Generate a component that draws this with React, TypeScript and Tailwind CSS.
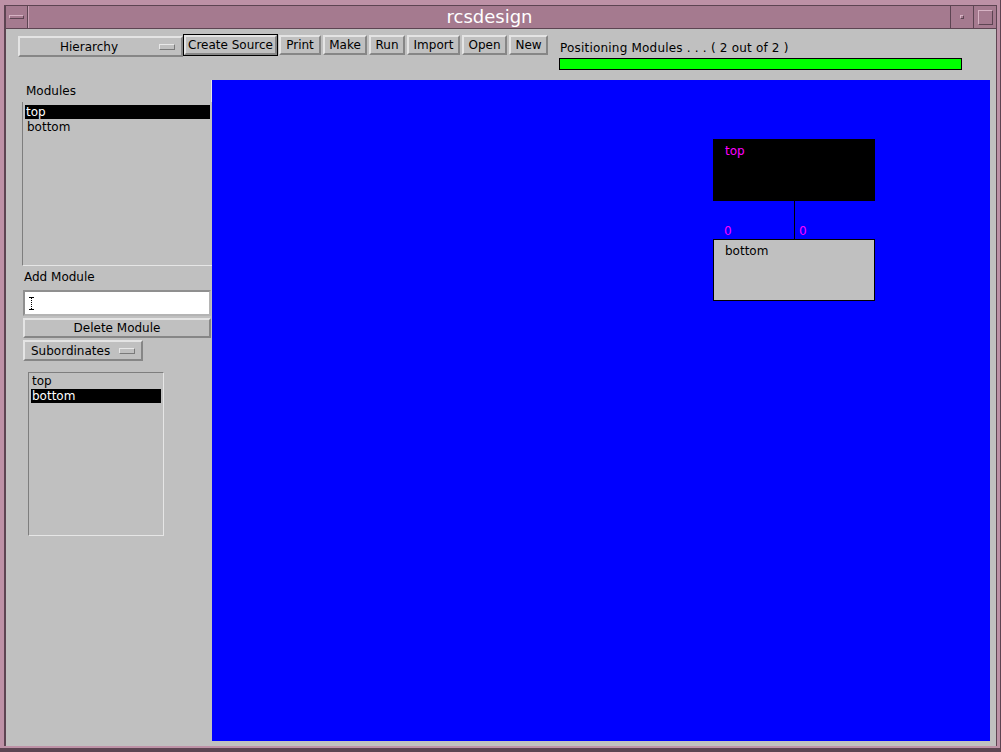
import React from "react";

const raised =
  "border-2 border-t-[#e4e4e4] border-l-[#e4e4e4] border-r-[#868686] border-b-[#868686] bg-[#c0c0c0]";
const sunken =
  "border border-t-[#7e7e7e] border-l-[#7e7e7e] border-r-[#e6e6e6] border-b-[#e6e6e6]";

function Indicator() {
  return (
    <span className="block h-[6px] w-[16px] border border-t-[#e8e8e8] border-l-[#e8e8e8] border-r-[#7a7a7a] border-b-[#7a7a7a] bg-[#c0c0c0]" />
  );
}

function ToolButton({ label, w }: { label: string; w: string }) {
  return (
    <div className={`${raised} ${w} mt-[6px] flex h-[20px] items-center justify-center text-[12px] leading-none text-black`}>
      {label}
    </div>
  );
}

export default function App() {
  return (
    <div className="flex h-[752px] w-[1001px] border-r border-b-[4px] border-[#5d4452] bg-[#bd91a6] pt-[5px] pr-[3px] pb-[2px] pl-[4px] font-['DejaVu_Sans',sans-serif]">
      <div className="flex flex-1 flex-col border-t border-l-2 border-r border-[#5d4452] bg-[#a57a8f]">
        {/* title bar */}
        <div className="flex h-[23px] border-b border-[#5d4452]">
          <div className="flex w-[22px] items-center justify-center border-r border-[#5d4452]">
            <span className="block h-[4px] w-[15px] border border-t-[#d7b3c4] border-l-[#d7b3c4] border-r-[#5d4452] border-b-[#5d4452]" />
          </div>
          <div className="flex flex-1 items-center justify-center border-l border-[#c9a2b5] text-[18px] leading-none text-white">
            rcsdesign
          </div>
          <div className="flex w-[23px] items-center justify-center border-l border-[#5d4452]">
            <span className="block h-[4px] w-[4px] border border-t-[#d7b3c4] border-l-[#d7b3c4] border-r-[#5d4452] border-b-[#5d4452]" />
          </div>
          <div className="flex w-[23px] items-center justify-center border-l border-[#5d4452]">
            <span className="block h-[15px] w-[15px] border border-t-[#d7b3c4] border-l-[#d7b3c4] border-r-[#5d4452] border-b-[#5d4452]" />
          </div>
        </div>

        {/* content */}
        <div className="flex flex-1 flex-col bg-[#c0c0c0]">
          {/* toolbar */}
          <div className="flex h-[51px] items-start pl-[12px]">
            <div className={`${raised} mt-[7px] flex h-[21px] w-[165px] items-center pl-[40px] pr-[6px] text-[12px] leading-none text-black`}>
              <span className="flex-1">Hierarchy</span>
              <Indicator />
            </div>
            <div className="mt-[5px] border border-black">
              <div className={`${raised} flex h-[20px] w-[93px] items-center justify-center text-[12px] leading-none text-black`}>
                Create Source
              </div>
            </div>
            <div className="ml-[1px] flex gap-[2px]">
              <ToolButton label="Print" w="w-[42px]" />
              <ToolButton label="Make" w="w-[44px]" />
              <ToolButton label="Run" w="w-[36px]" />
              <ToolButton label="Import" w="w-[53px]" />
              <ToolButton label="Open" w="w-[45px]" />
              <ToolButton label="New" w="w-[39px]" />
            </div>
            <div className="ml-[11px] mt-[12px] flex flex-col">
              <span className="h-[17px] pl-[1px] text-[12px] leading-[14px] tracking-[0.2px] text-black">
                Positioning Modules . . . ( 2 out of 2 )
              </span>
              <div className="h-[12px] w-[403px] border border-black bg-[#00ff00]" />
            </div>
          </div>

          {/* main row */}
          <div className="flex">
            {/* left panel */}
            <div className="flex w-[206px] flex-col">
              <div className="ml-[16px] flex h-[22px] w-[190px] items-center border-r border-[#e6e6e6] pl-[4px] text-[12px] leading-none text-black">
                Modules
              </div>
              <div className="ml-[16px] h-[164px] w-[190px] border-l border-b border-l-[#7e7e7e] border-b-[#e6e6e6] pt-[3px] pl-[2px] pr-[2px]">
                <div className="h-[14px] bg-black pl-[1px] text-[12px] leading-[14px] text-white">top</div>
                <div className="h-[15px] pl-[2px] pt-[1px] text-[12px] leading-[14px] text-black">bottom</div>
              </div>
              <div className="flex h-[24px] items-center pl-[18px] pb-[2px] text-[12px] leading-none text-black">
                Add Module
              </div>
              <div className="ml-[17px] flex h-[26px] w-[188px] items-center border-2 border-t-[#8f8f8f] border-l-[#8f8f8f] border-r-[#b4b4b4] border-b-[#b4b4b4] bg-white pl-[4px]">
                <svg width="5" height="13" viewBox="0 0 5 13">
                  <path d="M0 0.5h5M0 12.5h5" stroke="#000" strokeWidth="1" />
                  <path d="M2.5 1v11" stroke="#000" strokeWidth="1" strokeDasharray="1 1" />
                </svg>
              </div>
              <div className={`${raised} ml-[17px] mt-[2px] flex h-[20px] w-[188px] items-center justify-center text-[12px] leading-none text-black`}>
                Delete Module
              </div>
              <div className={`${raised} ml-[17px] mt-[2px] flex h-[21px] w-[120px] items-center pl-[6px] pr-[6px] text-[12px] leading-none text-black`}>
                <span className="flex-1">Subordinates</span>
                <Indicator />
              </div>
              <div className={`${sunken} ml-[22px] mt-[11px] h-[164px] w-[136px] pt-[1px] pl-[2px] pr-[2px]`}>
                <div className="h-[15px] pl-[1px] text-[12px] leading-[14px] text-black">top</div>
                <div className="h-[14px] bg-black pl-[1px] text-[12px] leading-[14px] text-white">bottom</div>
              </div>
            </div>

            {/* canvas */}
            <div className="relative h-[661px] w-[778px] bg-[#0000ff]">
              <div className="absolute left-[501px] top-[59px] h-[62px] w-[162px] bg-black pl-[12px] pt-[5px] text-[12px] leading-[14px] text-[#ff00ff]">
                top
              </div>
              <div className="absolute left-[582px] top-[121px] h-[38px] w-[1px] bg-black" />
              <span className="absolute left-[512px] top-[144px] text-[12px] leading-[14px] text-[#ff00ff]">0</span>
              <span className="absolute left-[587px] top-[144px] text-[12px] leading-[14px] text-[#ff00ff]">0</span>
              <div className="absolute left-[501px] top-[159px] h-[62px] w-[162px] border border-black bg-[#c0c0c0] pl-[11px] pt-[4px] text-[12px] leading-[14px] text-black">
                bottom
              </div>
            </div>
          </div>
        </div>
      </div>
    </div>
  );
}
